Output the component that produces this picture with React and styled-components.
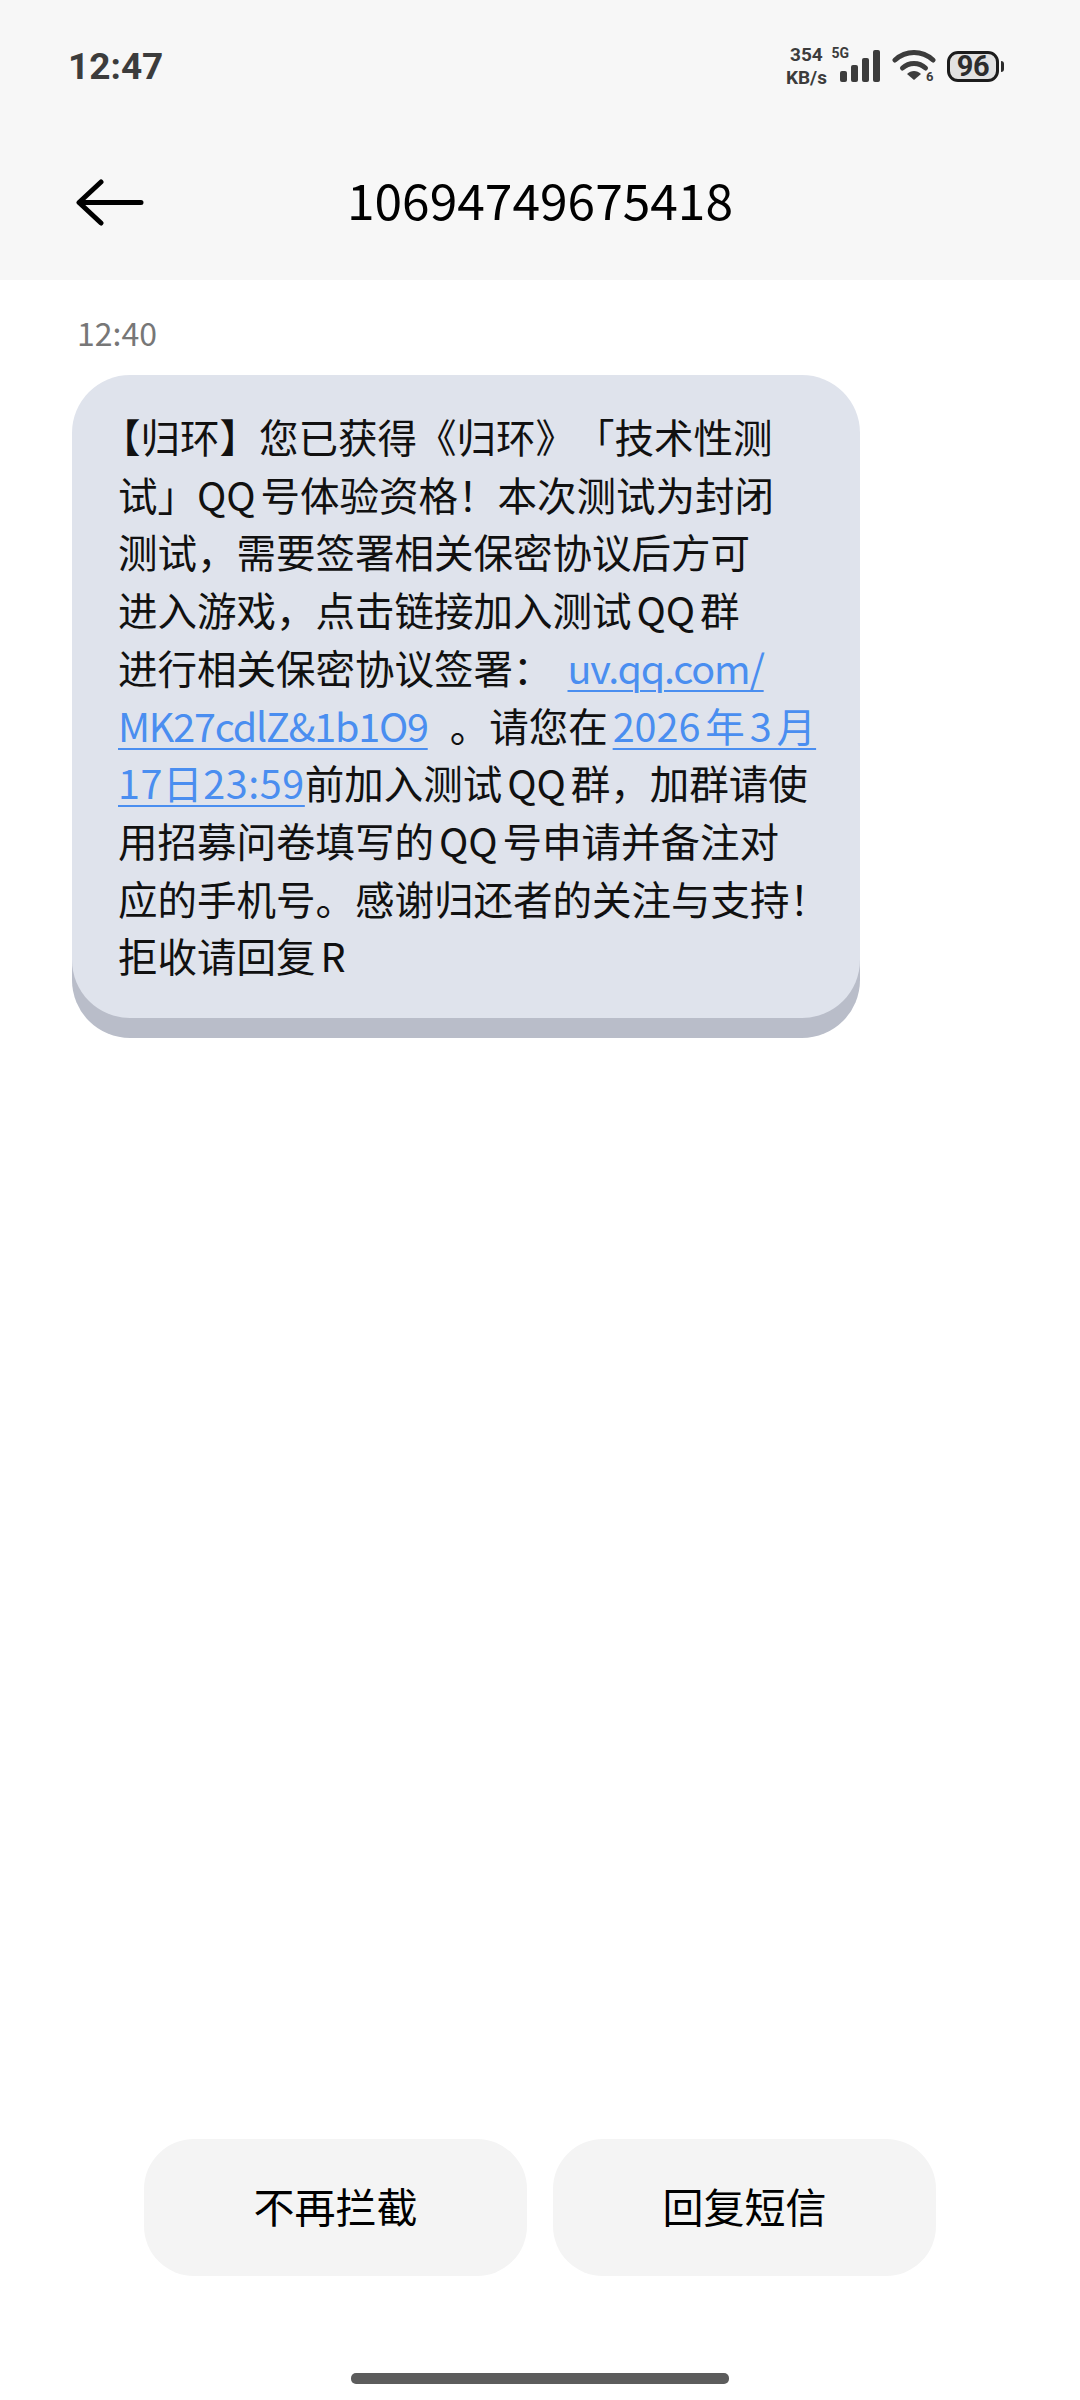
import React from "react";
import styled, { createGlobalStyle } from "styled-components";

const cjk = `"Noto Sans CJK SC", "Noto Sans", sans-serif`;

const GlobalStyle = createGlobalStyle`
    html, body {
        margin: 0;
        padding: 0;
        background: #fff;
    }
    #root {
        width: 1080px;
        height: 2400px;
    }
`;

const Page = styled.div`
    width: 1080px;
    height: 2400px;
    display: flex;
    flex-direction: column;
    background: #fff;
    font-family: ${cjk};
    overflow: hidden;
`;

const Top = styled.header`
    height: 280px;
    background: #f7f7f7;
    display: flex;
    flex-direction: column;
`;

const StatusBar = styled.div`
    height: 132px;
    display: flex;
    align-items: center;
    justify-content: space-between;
    padding: 0 81px 0 68px;
`;

const Clock = styled.span`
    font-family: Roboto, sans-serif;
    font-weight: 700;
    font-size: 37px;
    color: #3c3c3c;
`;

const StatusIcons = styled.div`
    display: flex;
    align-items: center;
`;

const Speed = styled.div`
    width: 46px;
    display: flex;
    flex-direction: column;
    align-items: center;
    font-family: Roboto, sans-serif;
    font-weight: 700;
    font-size: 19px;
    line-height: 23px;
    color: #3c3c3c;
`;

const Network = styled.span`
    align-self: flex-start;
    margin: 2px 0 0 2px;
    font-family: Roboto, sans-serif;
    font-weight: 700;
    font-size: 14px;
    color: #3c3c3c;
`;

const Signal = styled.svg`
    margin: 0 12px 0 -9px;
`;

const Battery = styled.div`
    position: relative;
    width: 52px;
    height: 31px;
    margin-left: 11px;
    box-sizing: border-box;
    border: 3px solid #1c1c1c;
    border-radius: 11px;
    background: #e2e2e2;
    display: flex;
    align-items: center;
    justify-content: center;
    font-family: Roboto, sans-serif;
    font-weight: 700;
    font-size: 29px;
    letter-spacing: -0.5px;
    color: #2c2c2c;
    &::after {
        content: "";
        position: absolute;
        right: -8px;
        top: 7px;
        width: 3px;
        height: 11px;
        border-radius: 0 3px 3px 0;
        background: #2c2c2c;
    }
`;

const NavBar = styled.div`
    height: 142px;
    display: grid;
    grid-template-columns: 1fr auto 1fr;
    align-items: center;
`;

const BackArrow = styled.svg`
    margin-left: 76px;
`;

const Title = styled.h1`
    margin: 0 0 11px;
    font-size: 49.7px;
    font-weight: 400;
    color: #000;
`;

const Stamp = styled.div`
    margin: 32px 0 0 77px;
    font-size: 32px;
    line-height: 40px;
    color: #777;
`;

const Bubble = styled.div`
    width: 788px;
    box-sizing: border-box;
    margin: 23px 0 0 72px;
    padding: 32px 0 34px 46px;
    border-radius: 58px;
    background: #dfe3ec;
    box-shadow: 0 20px 0 #b9bdc9;
    font-size: 39.5px;
    line-height: 57.7px;
    color: #111;
    text-autospace: normal;
    text-spacing-trim: space-all;
`;

const Line = styled.div`
    white-space: nowrap;
`;

// 标点位置跟系统字体不一样，这里手动挪一下
const Punct = styled.span`
    margin-left: ${props => props.$left || 0}px;
`;

const Link = styled.span`
    color: #4a8ef0;
    text-decoration: underline;
    text-decoration-thickness: 2px;
    text-underline-offset: 6px;
    margin-left: ${props => props.$gap || 0}px;
    letter-spacing: ${props => props.$tight ? "-1.2px" : props.$flat ? "0.6px" : "0"};
    text-autospace: ${props => props.$flat ? "no-autospace" : "normal"};
`;

const Spacer = styled.div`
    flex: 1;
`;

const Actions = styled.div`
    display: grid;
    grid-template-columns: 383px 383px;
    justify-content: center;
    gap: 26px;
`;

const ActionButton = styled.button`
    height: 137px;
    border: none;
    border-radius: 50px;
    padding: 0 0 5px;
    background: #f4f4f4;
    font-family: ${cjk};
    font-size: 41px;
    font-weight: 400;
    color: #000;
`;

const HomeBar = styled.div`
    width: 378px;
    height: 11px;
    margin: 97px auto 16px;
    border-radius: 5px;
    background: #5c5c5c;
`;

const App = () => {
    return (
        <Page>
            <GlobalStyle />
            <Top>
                <StatusBar>
                    <Clock>12:47</Clock>
                    <StatusIcons>
                        <Speed>
                            <span>354</span>
                            <span>KB/s</span>
                        </Speed>
                        <Network>5G</Network>
                        <Signal width="40" height="34" viewBox="0 0 40 34">
                            <rect x="0" y="22" width="7" height="11" rx="2" fill="#3c3c3c" />
                            <rect x="11" y="16" width="7" height="17" rx="2" fill="#3c3c3c" />
                            <rect x="22" y="9" width="7" height="24" rx="2" fill="#3c3c3c" />
                            <rect x="33" y="1" width="7" height="32" rx="2" fill="#3c3c3c" />
                        </Signal>
                        <svg width="44" height="36" viewBox="0 0 44 36">
                            <path d="M3 12 C14 2 30 2 41 12" fill="none" stroke="#3c3c3c" strokeWidth="5" strokeLinecap="round" />
                            <path d="M10.5 20 C17 14 27 14 33.5 20" fill="none" stroke="#3c3c3c" strokeWidth="5" strokeLinecap="round" />
                            <path d="M15 26 C19 22 25 22 29 26 L22 32 Z" fill="#3c3c3c" />
                            <text x="34" y="33" fontFamily="Roboto, sans-serif" fontWeight="700" fontSize="13" fill="#3c3c3c">6</text>
                        </svg>
                        <Battery>96</Battery>
                    </StatusIcons>
                </StatusBar>
                <NavBar>
                    <BackArrow width="68" height="50" viewBox="0 0 68 50">
                        <path d="M65 24.5 H4 M25 4 L3 24.5 L25 45" fill="none" stroke="#000" strokeWidth="5" strokeLinecap="round" strokeLinejoin="round" />
                    </BackArrow>
                    <Title>10694749675418</Title>
                </NavBar>
            </Top>
            <Stamp>12:40</Stamp>
            <Bubble>
                <Line><Punct $left={-17}>【</Punct>归环】您已获得《归环》「技术性测</Line>
                <Line>试」QQ号体验资格！本次测试为封闭</Line>
                <Line>测试，需要签署相关保密协议后方可</Line>
                <Line>进入游戏，点击链接加入测试QQ群</Line>
                <Line>进行相关保密协议签署：<Link $gap={15} $tight>uv.qq.com/</Link></Line>
                <Line><Link $tight>MK27cdlZ&amp;1b1O9</Link><Punct $left={22}>。</Punct>请您在<Link>2026年3月</Link></Line>
                <Line><Link $flat>17日23:59</Link>前加入测试QQ群，加群请使</Line>
                <Line>用招募问卷填写的QQ号申请并备注对</Line>
                <Line>应的手机号。感谢归还者的关注与支持！</Line>
                <Line>拒收请回复R</Line>
            </Bubble>
            <Spacer />
            <Actions>
                <ActionButton>不再拦截</ActionButton>
                <ActionButton>回复短信</ActionButton>
            </Actions>
            <HomeBar />
        </Page>
    );
};

export default App;
